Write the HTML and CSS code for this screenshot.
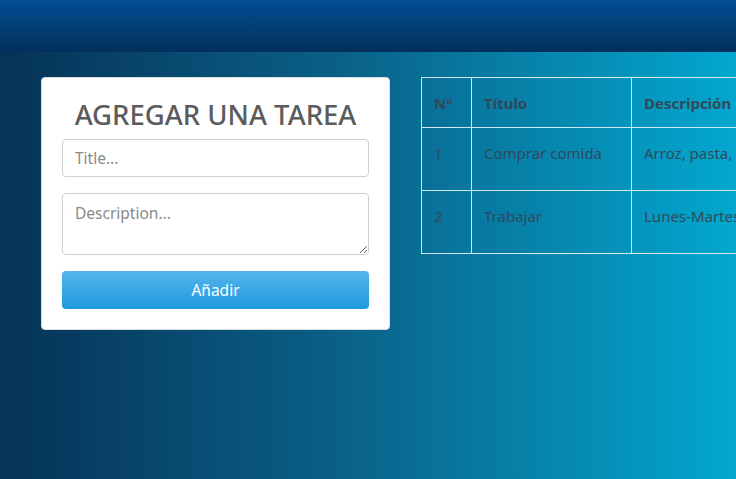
FILE: index.html
```html
<!DOCTYPE html>
<html lang="es">
<head>
<meta charset="utf-8">
<title>Tareas</title>
<link rel="stylesheet" href="styles.css">
</head>
<body>
<header class="topbar"></header>
<main class="content">
  <section class="card">
    <h2 class="card-title">AGREGAR UNA TAREA</h2>
    <form class="task-form">
      <input class="field" type="text" placeholder="Title...">
      <textarea class="field field-area" placeholder="Description..."></textarea>
      <button class="btn" type="button">Añadir</button>
    </form>
  </section>
  <div class="table-wrap">
    <table class="tasks">
      <thead>
        <tr><th class="c-num">Nº</th><th class="c-title">Título</th><th class="c-desc">Descripción</th></tr>
      </thead>
      <tbody>
        <tr><td>1</td><td>Comprar comida</td><td>Arroz, pasta, leche</td></tr>
        <tr><td>2</td><td>Trabajar</td><td>Lunes-Martes-Miércoles</td></tr>
      </tbody>
    </table>
  </div>
</main>
</body>
</html>
```
FILE: styles.css
```css
* { box-sizing: border-box; }
html, body { height: 100%; }
body {
  margin: 0;
  font-family: "Noto Sans", "Open Sans", sans-serif;
  background: linear-gradient(to right, #063257 0%, #0a5f86 45%, #03a7d0 100%);
  overflow: hidden;
}
.topbar {
  height: 52px;
  background: linear-gradient(to bottom, #024f94, #032f5c);
}
.content {
  display: flex;
  align-items: flex-start;
  gap: 31px;
  padding: 25px 0 0 41px;
}
.card {
  flex: 0 0 349px;
  background: #fff;
  border: 1px solid #dcdcdc;
  border-radius: 4px;
  padding: 20px 20px 20px;
}
.card-title {
  margin: 0 0 7px;
  text-align: center;
  font-size: 27.5px;
  font-weight: 500;
  line-height: 34px;
  color: #5b5b5b;
}
.task-form {
  display: flex;
  flex-direction: column;
}
.field {
  display: block;
  width: 100%;
  height: 38px;
  border: 1px solid #cfcfcf;
  border-radius: 4px;
  padding: 6px 12px;
  font-family: inherit;
  font-size: 15.5px;
  color: #555;
  margin: 0 0 16px;
}
.field::placeholder { color: #8a8a8a; }
.field-area {
  height: 62px;
  padding-top: 8px;
  resize: vertical;
}
.btn {
  height: 38px;
  width: 100%;
  border: none;
  border-radius: 4px;
  background: linear-gradient(to bottom, #55b4ea, #1f99e1);
  color: #fff;
  font-family: inherit;
  font-size: 15.5px;
}
.table-wrap {
  flex: 1 0 auto;
}
.tasks {
  border-collapse: collapse;
  border: 1px solid #cfe9f2;
  color: #32495a;
  font-size: 15px;
}
.tasks th, .tasks td {
  border: 1px solid #cfe9f2;
  padding: 0 12px;
  text-align: left;
  white-space: nowrap;
}
.tasks th {
  height: 50px;
  font-weight: 700;
  vertical-align: middle;
}
.tasks td {
  height: 63px;
  vertical-align: top;
  padding-top: 15px;
  font-weight: 400;
}
.c-num { width: 50px; }
.c-title { width: 160px; }
.c-desc { width: 260px; }
```
